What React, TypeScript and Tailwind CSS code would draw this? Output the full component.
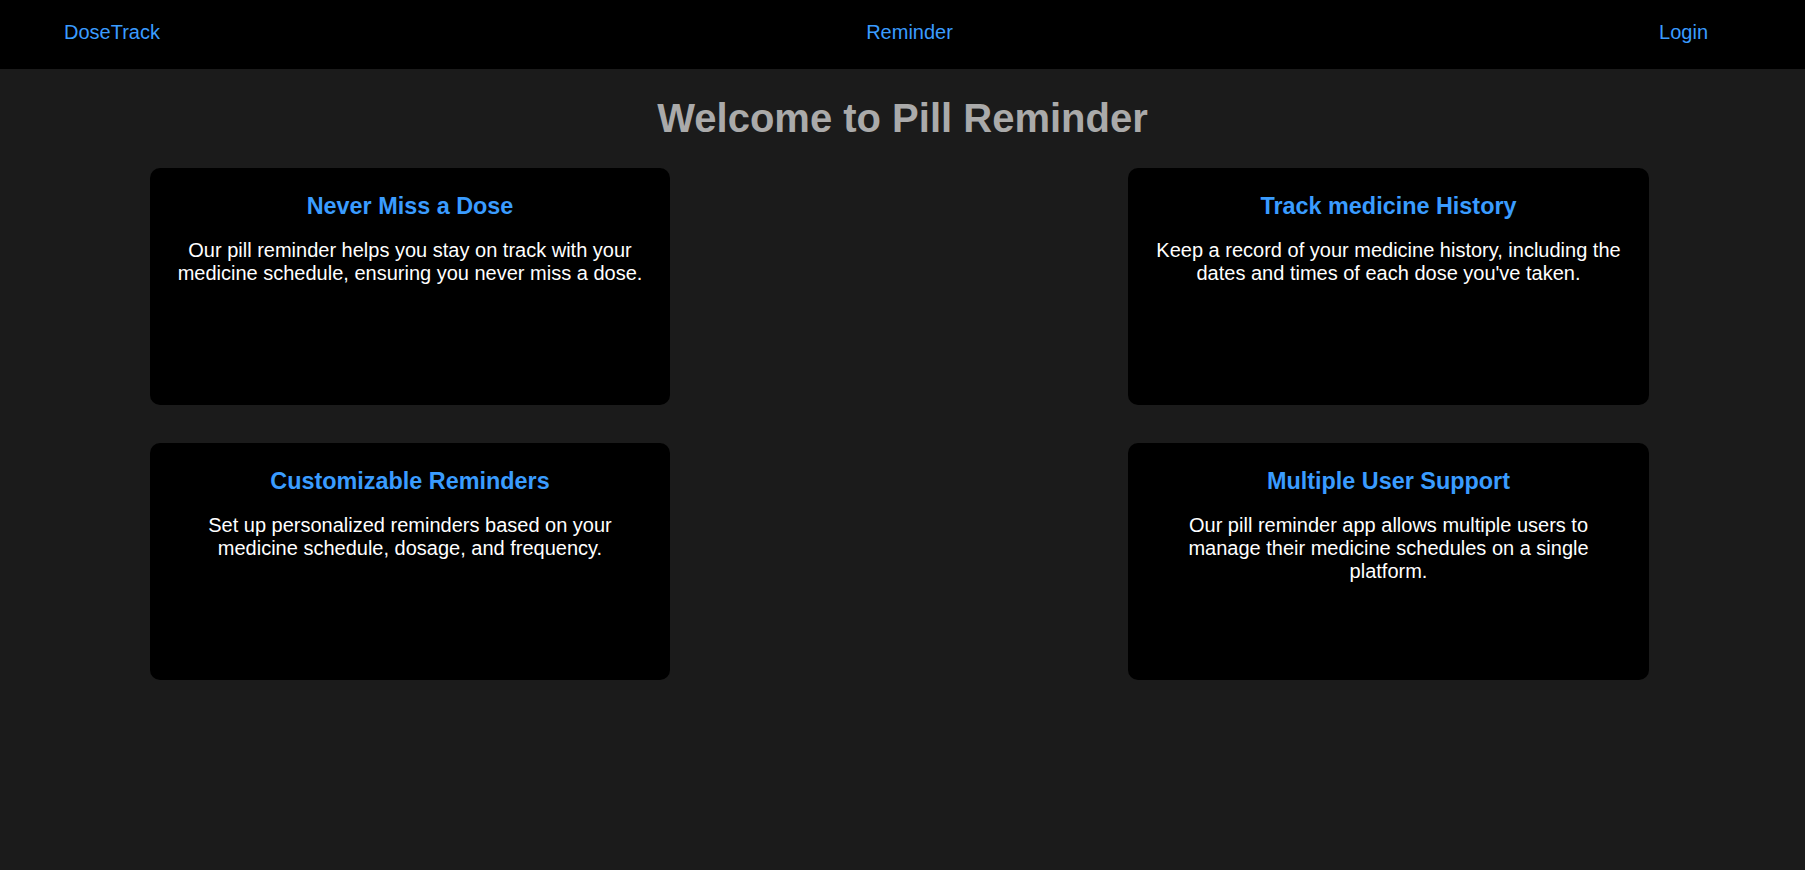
const features = [
  {
    title: "Never Miss a Dose",
    text: "Our pill reminder helps you stay on track with your medicine schedule, ensuring you never miss a dose.",
  },
  {
    title: "Track medicine History",
    text: "Keep a record of your medicine history, including the dates and times of each dose you've taken.",
  },
  {
    title: "Customizable Reminders",
    text: "Set up personalized reminders based on your medicine schedule, dosage, and frequency.",
  },
  {
    title: "Multiple User Support",
    text: "Our pill reminder app allows multiple users to manage their medicine schedules on a single platform.",
  },
];

function FeatureCard({ title, text }: { title: string; text: string }) {
  return (
    <div className="h-[237px] bg-black rounded-[10px] px-[25px] pt-[25px] text-center">
      <h3 className="text-[23.4px] leading-[27px] font-bold text-[#3a9cff]">{title}</h3>
      <p className="mt-[19px] text-[20px] leading-[23px] text-white">{text}</p>
    </div>
  );
}

export default function App() {
  return (
    <div className="min-h-[870px] bg-[#1b1b1b] font-['Liberation_Sans',Arial,sans-serif]">
      {/* Navbar */}
      <header className="h-[69px] bg-black pl-[64px] pr-[97px] pt-[21px]">
        <nav className="flex justify-between text-[20px] leading-[23px] text-[#3a9cff]">
          <a href="#">DoseTrack</a>
          <a href="#">Reminder</a>
          <a href="#">Login</a>
        </nav>
      </header>

      <main>
        <h1 className="mt-[26px] mb-[27px] text-center text-[40px] leading-[46px] font-bold text-[#aaaaaa]">
          Welcome to Pill Reminder
        </h1>

        <div className="ml-[150px] w-[1499px] grid grid-cols-[520px_521px] justify-between gap-y-[38px]">
          {features.map((f) => (
            <FeatureCard key={f.title} title={f.title} text={f.text} />
          ))}
        </div>
      </main>
    </div>
  );
}
